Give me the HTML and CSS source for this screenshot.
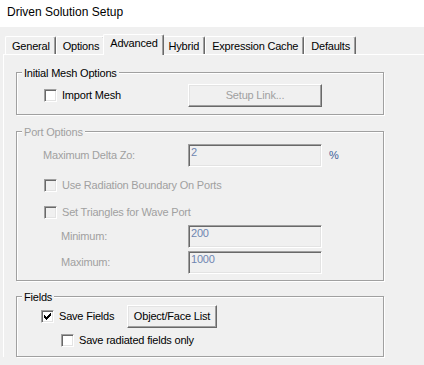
FILE: index.html
```html
<!DOCTYPE html>
<html>
<head>
<meta charset="utf-8">
<title>Driven Solution Setup</title>
<link rel="stylesheet" href="styles.css">
</head>
<body>
<div class="titlebar">Driven Solution Setup</div>
<div class="tabs">
  <div class="tab">General</div>
  <div class="tab">Options</div>
  <div class="tab active">Advanced</div>
  <div class="tab">Hybrid</div>
  <div class="tab">Expression Cache</div>
  <div class="tab">Defaults</div>
</div>
<div class="panel">
  <div class="group g1">
    <div class="legend">Initial Mesh Options</div>
    <div class="frow mesh-row">
      <label class="check"><span class="box"></span><span>Import Mesh</span></label>
      <div class="btn disabled-text">Setup Link...</div>
    </div>
  </div>

  <div class="group g2 disabled">
    <div class="legend">Port Options</div>
    <div class="frow r-delta">
      <span>Maximum Delta Zo:</span>
      <div class="field">2</div>
      <span class="unit">%</span>
    </div>
    <label class="check crow r-rad"><span class="box"></span><span>Use Radiation Boundary On Ports</span></label>
    <label class="check crow r-tri"><span class="box"></span><span>Set Triangles for Wave Port</span></label>
    <div class="frow r-min">
      <span class="indent">Minimum:</span>
      <div class="field">200</div>
    </div>
    <div class="frow r-max">
      <span class="indent">Maximum:</span>
      <div class="field">1000</div>
    </div>
  </div>

  <div class="group g3">
    <div class="legend">Fields</div>
    <div class="fields-row">
      <label class="check"><span class="box"><svg class="tick" width="11" height="11" viewBox="0 0 11 11" shape-rendering="crispEdges"><path d="M2 4h1v3H2z M3 5h1v3H3z M4 6h1v3H4z M5 5h1v3H5z M6 4h1v3H6z M7 3h1v3H7z M8 2h1v3H8z" fill="#000"/></svg></span><span>Save Fields</span></label>
      <div class="btn">Object/Face List</div>
    </div>
    <label class="check crow r-radonly"><span class="box"></span><span>Save radiated fields only</span></label>
  </div>
</div>
</body>
</html>
```

FILE: styles.css
```css
* {
  box-sizing: border-box;
}

html,
body {
  margin: 0;
  padding: 0;
}

body {
  width: 424px;
  height: 365px;
  overflow: hidden;
  background: #f0f0f0;
  font-family: "Liberation Sans", Arial, sans-serif;
  font-size: 11px;
  letter-spacing: -0.2px;
  line-height: 13px;
  color: #000;
}

.titlebar {
  height: 27px;
  background: #fff;
  padding: 0 0 2px 7px;
  font-size: 12px;
  letter-spacing: 0;
  line-height: 25px;
}

.tabs {
  display: flex;
  align-items: flex-end;
  height: 27px;
  padding-left: 5px;
}

.tab {
  height: 18px;
  padding: 3px 5px 1px 6px;
  border-left: 1px solid #fff;
  border-top: 1px solid #fff;
  border-right: 1px solid #696969;
  box-shadow: inset -1px 0 #a0a0a0;
  border-top-left-radius: 2px;
  border-top-right-radius: 2px;
  white-space: nowrap;
  background: #f0f0f0;
}

.tab.active {
  height: 21px;
  padding-top: 2px;
  margin: 0 -2px -1px;
  position: relative;
  z-index: 1;
}

.panel {
  margin-left: 3px;
  border-top: 1px solid #fff;
  border-left: 1px solid #fff;
  padding: 17px 0 0 12px;
}

.group {
  width: 368px;
  border: 1px solid #a0a0a0;
  box-shadow: inset 1px 1px #fff, 1px 1px #fff;
}

.legend {
  width: fit-content;
  margin: -6px 0 0 5px;
  padding: 0 2px;
  background: #f0f0f0;
  white-space: nowrap;
}

.disabled {
  color: #a0a0a0;
}

.disabled-text {
  color: #a0a0a0;
}

.g1 {
  padding-bottom: 7px;
}

.g2 {
  margin-top: 16px;
  padding-bottom: 6px;
}

.g3 {
  margin-top: 15px;
  padding-bottom: 9px;
}

.frow {
  display: grid;
  grid-template-columns: 145px 134px auto;
  align-items: center;
  height: 23px;
  padding-left: 26px;
  white-space: nowrap;
}

.mesh-row {
  margin-top: 4px;
  padding-left: 27px;
  grid-template-columns: 144px 134px;
}

.r-delta {
  margin-top: 5px;
}

.r-rad {
  margin-top: 12px;
}

.r-tri {
  margin-top: 14px;
}

.r-min {
  margin-top: 6px;
}

.r-max {
  margin-top: 3px;
}

.indent {
  padding-left: 18px;
}

.unit {
  margin-left: 7px;
  color: #3f5f99;
}

.check {
  display: flex;
  align-items: center;
  gap: 5px;
  white-space: nowrap;
}

.crow {
  height: 13px;
  padding-left: 27px;
}

.box {
  width: 13px;
  height: 13px;
  flex: none;
  border: 1px solid;
  border-color: #a0a0a0 #fff #fff #a0a0a0;
  box-shadow: inset 1px 1px #696969, inset -1px -1px #e3e3e3;
  background: #fff;
  display: block;
}

.tick {
  display: block;
}

.disabled .box {
  background: #f0f0f0;
}

.field {
  height: 23px;
  border: 1px solid;
  border-color: #a0a0a0 #fff #fff #a0a0a0;
  box-shadow: inset 1px 1px #696969, inset -1px -1px #e3e3e3;
  padding: 1px 0 0 2px;
  background: #f0f0f0;
  color: #6f86b0;
}

.btn {
  height: 23px;
  display: flex;
  align-items: center;
  justify-content: center;
  border: 1px solid;
  border-color: #fff #696969 #696969 #fff;
  box-shadow: inset -1px -1px #a0a0a0, inset 1px 1px #e3e3e3;
  background: #f0f0f0;
  white-space: nowrap;
}

.fields-row {
  display: grid;
  grid-template-columns: 86px 90px;
  align-items: center;
  height: 23px;
  margin-top: 1px;
  padding-left: 24px;
}

.r-radonly {
  margin-top: 6px;
  padding-left: 44px;
}
```
